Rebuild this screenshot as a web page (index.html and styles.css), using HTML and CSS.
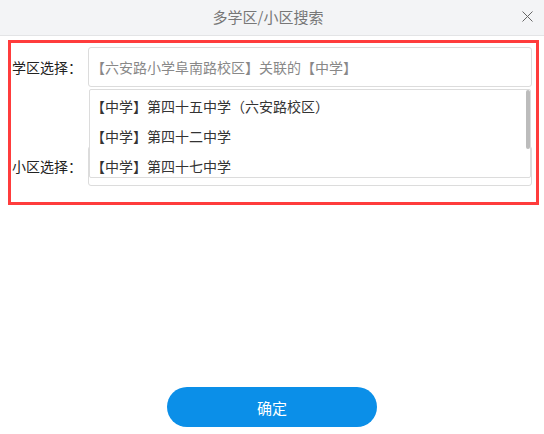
FILE: index.html
```html
<!DOCTYPE html>
<html lang="zh-CN">
<head>
    <meta charset="UTF-8">
    <meta name="viewport" content="width=device-width, initial-scale=1.0">
    <title>多学区/小区搜索</title>
    <link rel="stylesheet" href="styles.css">
</head>
<body>
    <div class="dialog">
        <div class="dialog-header">
            <span class="dialog-title">多学区/小区搜索</span>
            <span class="dialog-close">
                <svg width="11" height="11" viewBox="0 0 11 11"><path d="M0.5 0.5L10.5 10.5M10.5 0.5L0.5 10.5" stroke="#666" stroke-width="1" fill="none"/></svg>
            </span>
        </div>
        <div class="search-panel">
            <div class="form-row">
                <label class="form-label">学区选择：</label>
                <div class="form-field">
                    <input class="form-input" type="text" placeholder="【六安路小学阜南路校区】关联的【中学】">
                    <div class="dropdown">
                        <ul class="dropdown-list">
                            <li>【中学】第四十五中学（六安路校区）</li>
                            <li>【中学】第四十二中学</li>
                            <li>【中学】第四十七中学</li>
                        </ul>
                        <span class="scroll-thumb"></span>
                    </div>
                </div>
            </div>
            <div class="form-row second-row">
                <label class="form-label">小区选择：</label>
                <div class="form-field">
                    <input class="form-input" type="text">
                </div>
            </div>
        </div>
        <div class="dialog-footer">
            <button class="confirm-button">确定</button>
        </div>
    </div>
</body>
</html>
```

FILE: styles.css
```css
body {
    margin: 0;
    font-family: "Noto Sans CJK SC", "Noto Sans", sans-serif;
    font-size: 14px;
    color: #333;
    background: #fff;
}
.dialog-header {
    position: relative;
    height: 35px;
    line-height: 34px;
    background-color: #f3f4f6;
    border-bottom: 1px solid #e3e4e6;
    text-align: center;
}
.dialog-title {
    display: inline-block;
    padding-right: 8px;
    font-size: 15px;
    color: #777;
}
.dialog-close {
    position: absolute;
    right: 11px;
    top: 11px;
    width: 11px;
    height: 11px;
    line-height: 0;
}
.search-panel {
    margin: 4px 5px 0 8px;
    padding: 4px 4px 16px 0;
    border: 3px solid #ff3c3c;
}
.form-row {
    display: flex;
    align-items: center;
}
.second-row {
    margin-top: 59px;
}
.form-label {
    width: 76px;
    padding-left: 1px;
    color: #222;
    white-space: nowrap;
}
.form-field {
    position: relative;
    flex: 1;
}
.form-input {
    display: block;
    box-sizing: border-box;
    width: 100%;
    height: 40px;
    padding: 0 2px;
    border: 1px solid #dcdcdc;
    border-radius: 3px;
    font-family: inherit;
    font-size: 14px;
    color: #333;
    outline: none;
}
.form-input::placeholder {
    color: #888;
}
.dropdown {
    position: absolute;
    top: 42px;
    left: 1px;
    right: 1px;
    z-index: 2;
    box-sizing: border-box;
    height: 89px;
    background: #fff;
    border: 1px solid #dcdcdc;
    border-radius: 2px;
    overflow: hidden;
}
.dropdown-list {
    margin: 0;
    padding: 1px 0 0;
    list-style: none;
}
.dropdown-list li {
    height: 30px;
    line-height: 30px;
    padding-left: 1px;
    color: #333;
    white-space: nowrap;
}
.scroll-thumb {
    position: absolute;
    top: 0;
    right: 0;
    width: 4px;
    height: 59px;
    background-color: #bcbcbc;
    border-radius: 2px;
}
.dialog-footer {
    margin-top: 182px;
    text-align: center;
}
.confirm-button {
    width: 210px;
    height: 40px;
    border: none;
    border-radius: 20px;
    background-color: #0b8fe8;
    color: #fff;
    font-family: inherit;
    font-size: 15px;
    cursor: pointer;
}
```
